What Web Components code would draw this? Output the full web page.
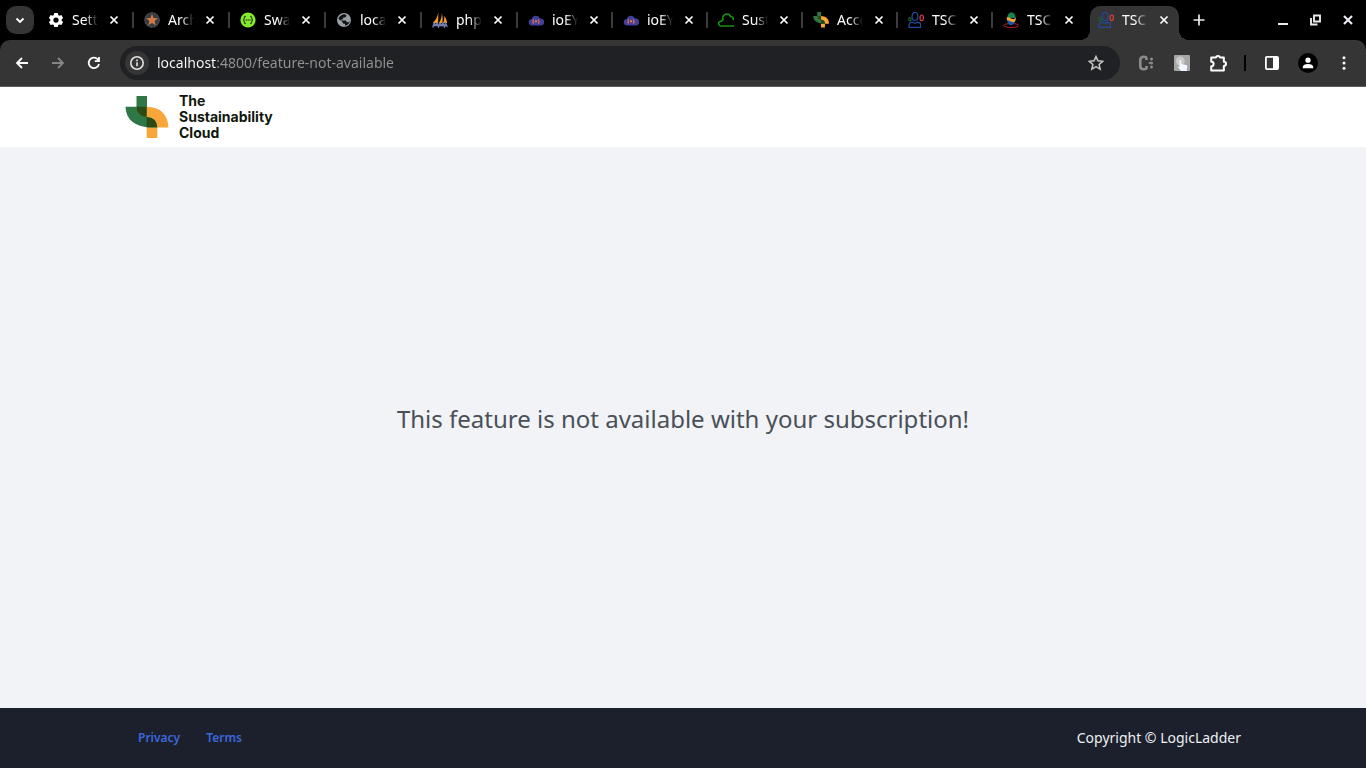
<!DOCTYPE html>
<html lang="en">
<head>
<meta charset="utf-8">
<title>TSC</title>
<style>
  html, body { margin: 0; height: 100%; }
  body { font-family: "Noto Sans", "Open Sans", sans-serif; display: flex; flex-direction: column; background: #f1f3f7; }
  feature-page { flex: 1; }
</style>
</head>
<body>
<browser-chrome></browser-chrome>
<feature-page>This feature is not available with your subscription!</feature-page>

<script>
const BRAND_MARK = `
  <path fill="#2f7745" d="M11.500 0H22v10.700h-.3V21Q32 21.500 32.300 31.500H26Q1 30 .500 10.700h11z"/>
  <path fill="#f8a63a" d="M21.700 10.700Q42 11 43.500 31.500H32.300V42H21.700V31.500h10.600Q32 21.500 21.700 21z"/>
  <path fill="#2c4a14" d="M11.500 10.700h10.200V21Q32 21.500 32.300 31.500H21.700V21q-10-1-10.200-10.300z"/>`;
const ICONS = {
  brand: `<g transform="scale(.37)">${BRAND_MARK}</g>`,
  chevron: '<path d="M4.500 6.500 8 10l3.500-3.500" fill="none" stroke="#fff" stroke-width="1.800"/>',
  close: '<path d="m4.500 4.500 7 7m0-7-7 7" fill="none" stroke="#fff" stroke-width="1.700"/>',
  plus: '<path d="M8 2.500v11M2.500 8h11" fill="none" stroke="#e8eaed" stroke-width="1.700"/>',
  gear: '<path fill="#fff" fill-rule="evenodd" d="M6.200 1h3.600l.4 2.100 1.200.7 2-.7 1.700 3-1.500 1.400v1.200l1.500 1.300-1.700 3.100-2-.7-1.200.7-.4 2H6.200l-.4-2-1.200-.7-2 .7L.9 10l1.500-1.300V7.500L.9 6.100l1.700-3 2 .7 1.200-.7zM8 5.500a2.600 2.600 0 1 0 0 5.200 2.600 2.600 0 0 0 0-5.200z"/>',
  star5: '<circle cx="8" cy="8" r="7.800" fill="#343a40"/><circle cx="8" cy="8" r="7" fill="none" stroke="#555b60" stroke-dasharray="2 1.500"/><path fill="#cf7a45" d="m8 1.800 1.600 4.300 4.500.1-3.500 2.800 1.200 4.500L8 11l-3.800 2.500L5.400 9 1.900 6.200l4.500-.1z"/>',
  swagger: '<circle cx="8" cy="8" r="7.600" fill="#85ea2d"/><path d="M6 4.300c-1.500 0-1.700.5-1.700 1.700S4.100 8 3 8c1.100 0 1.300.8 1.300 2s.2 1.700 1.700 1.700m4-7.400c1.500 0 1.700.5 1.700 1.700S11.900 8 13 8c-1.100 0-1.300.8-1.300 2s-.2 1.700-1.700 1.700" fill="none" stroke="#31551c" stroke-width="1.300"/><path d="M5.800 8h4.800" stroke="#31551c" stroke-width="1.500" stroke-dasharray="1.200 .6"/>',
  globe: '<circle cx="8" cy="8" r="7" fill="#9aa0a6"/><path fill="#111" d="M7.500 2.200c2.300-.3 3 .7 3 1.700L9.200 5.500H7.200v1.700H5.400v1.300h3.800q1.500.3 1.500 1.800h2.100q1-1.300 1-2.300.200 3-2.300 4.800l-2.600.9.3-1.900-1.600-.1-1.300-1.400V9.600L2.500 7c.2-1 .7-2 1.400-2.800l1.300-1z"/>',
  sails: '<path fill="#f59a22" d="M6.300 0C5.800 4 4 8 .8 11h5.400zm3.400 1C10 4 9 8 7 11h3.300c.6-3 .6-7-.6-10zM12 4c.6 2.500.1 5-.9 7h4C14.800 8 13.700 5.500 12 4z"/><path d="M.8 15.500 2 11l2 2 1.500-2 1 4 1.500-4 2 2.500 1-2.500 1.500 4 1-4 1.700 4M1 13.500h13" fill="none" stroke="#7480b4" stroke-width="1.300"/>',
  iot: '<path fill="#42409c" d="M3.500 13.500a3.300 3.300 0 0 1-.2-6.500h.6a4.200 4.200 0 0 1 8-.5h.6a3.500 3.500 0 0 1 .3 7z"/><circle cx="8" cy="9.300" r="1.100" fill="#f58634"/><path d="M5.700 7.200q-1.400 2.200 0 4.400m4.600-4.400q1.400 2.200 0 4.400" fill="none" stroke="#e16b4d" stroke-width="1.200"/>',
  cloud: '<path d="M16 14H3a2.400 2.400 0 0 1-1.500-4.200q.8-.8 1.900-.7L5 7.500C3.800 5 6 2.300 8.500 2c2-.2 3.500 1 4 2.600 2-.3 3 1.300 2.700 3.400" fill="none" stroke="#119311" stroke-width="1.600"/>',
  people: '<g fill="none" stroke-width="1.200"><ellipse cx="7" cy="4.500" rx="2.900" ry="4" stroke="#2149a0"/><path stroke="#2149a0" d="M1 15.300c-.4-3.500.8-5.300 3.500-5q2.500 1.600 5 0c2.700-.2 3.500 1.500 3 5z"/><ellipse cx="13.700" cy="5.800" rx="1.700" ry="2.800" stroke="#e23b43"/><ellipse cx="1.900" cy="7.200" rx="1.200" ry="1.600" stroke="#17632a"/></g>',
  earth: '<ellipse cx="8" cy="13.500" rx="7.400" ry="2" fill="none" stroke="#b7212d"/><path fill="#1e57aa" d="M4 8c2-.5 4 2.500 8 .8-1 3-2.500 4.500-4 4.500S4.200 11 4 8z"/><path fill="#16844a" d="M8.300.5c3 0 4.500 2.500 4.200 5.500L4.300 6c0-3 1.500-5.500 4-5.500z"/><path fill="#f6a63a" d="M3.800 5.300c3-.8 4 1.500 6 1.800 1.500.2 2.300-.7 3-1.500.2 2-.4 3.500-1.400 4.500-2.400.7-5-1.800-7.600-2z"/>',
  back: '<path d="M14 8H3m5-5L3 8l5 5" fill="none" stroke="#fff" stroke-width="1.800"/>',
  forward: '<path d="M2 8h11M8 3l5 5-5 5" fill="none" stroke="#858585" stroke-width="1.800"/>',
  reload: '<path d="M13 9a5.200 5.200 0 1 1-1.300-4.700L13 5.700M13 2v4.200H8.800" fill="none" stroke="#fff" stroke-width="1.800"/>',
  info: '<circle cx="8" cy="8" r="6.200" fill="none" stroke="#e3e3e3" stroke-width="1.600"/><path d="M8 7.200v4M8 4.600v1.600" stroke="#e3e3e3" stroke-width="1.600"/>',
  star: '<path d="m8 1.500 1.900 4.300 4.800.5-3.600 3.100 1.100 4.800L8 11.700l-4.200 2.500 1.100-4.800-3.600-3.100 4.800-.5z" fill="none" stroke="#c7c7c7" stroke-width="1.500"/>',
  ext: '<path d="M8.500 5V3.800Q8.500 1.700 5.700 1.700T2.300 4.400v7.200q0 2.700 3.400 2.700t2.800-2.100V11" fill="none" stroke="#8c8c8c" stroke-width="2.600"/><g fill="#8c8c8c"><circle cx="13.500" cy="4" r="1.500"/><circle cx="13.500" cy="8" r="1.500"/><circle cx="13.500" cy="12" r="1.500"/><circle cx="11.500" cy="8" r="1"/></g>',
  touch: '<rect width="16" height="16" rx="1" fill="#a6a6a6"/><circle cx="6.300" cy="6" r="4.500" fill="#c9c9c9"/><path fill="#f1f7ff" d="M5.500 5.500q.9-1 1.800 0V9l5 .9q1.200.4 1 1.800l-.6 4.300H7.200L4 12.200q.2-1.200 1.500-.5z"/>',
  puzzle: '<path d="M2 3.200h4.100a1.900 1.900 0 0 1 3.700 0h3.400v3.600a1.900 1.900 0 0 1 0 3.800v4.100H2v-3.700a2.100 2.100 0 0 0 0-4.200z" fill="none" stroke="#fff" stroke-width="1.800" stroke-linejoin="round"/>',
  panel: '<rect x="1.900" y="1.900" width="12.200" height="12.200" rx="1" fill="none" stroke="#fff" stroke-width="1.800"/><path fill="#fff" d="M9 2h5v12H9z"/>',
  user: '<circle cx="8" cy="4.800" r="3" fill="#fff"/><path fill="#fff" d="M2 14v-1.500Q2.500 9 8 9t6 3.500V14z"/>',
  dots: '<g fill="#fff"><circle cx="8" cy="2.800" r="1.500"/><circle cx="8" cy="8" r="1.500"/><circle cx="8" cy="13.200" r="1.500"/></g>',
  min: '<path d="M2 12h10" stroke="#e8eaed" stroke-width="2"/>',
  restore: '<path d="M6 3.500h6v6H6z" fill="none" stroke="#e8eaed" stroke-width="1.900"/><path d="M3 6v6.500h6.500" fill="none" stroke="#e8eaed" stroke-width="1.900"/>',
  winclose: '<path d="m4 4 8 8m0-8-8 8" stroke="#e8eaed" stroke-width="2.200"/>'
};

class UiIcon extends HTMLElement {
  connectedCallback() {
    this.attachShadow({ mode: 'open' }).innerHTML = `
      <style>:host{display:block;flex:none;width:16px;height:16px}svg{display:block;width:100%;height:100%}</style>
      <svg viewBox="0 0 16 16" aria-hidden="true">${ICONS[this.getAttribute('name')]}</svg>`;
  }
}
customElements.define('ui-icon', UiIcon);

class IconButton extends HTMLElement {
  connectedCallback() {
    this.attachShadow({ mode: 'open' }).innerHTML = `
      <style>
        :host{display:block;flex:none;width:28px;height:28px}
        button{all:unset;box-sizing:border-box;width:100%;height:100%;display:grid;place-items:center;border-radius:var(--radius,50%);background:var(--fill,transparent);cursor:pointer}
        ui-icon{width:var(--size,16px);height:var(--size,16px)}
      </style>
      <button type="button" aria-label="${this.getAttribute('label')}"><ui-icon name="${this.getAttribute('icon')}"></ui-icon></button>`;
  }
}
customElements.define('icon-button', IconButton);

class BrowserTab extends HTMLElement {
  connectedCallback() {
    this.attachShadow({ mode: 'open' }).innerHTML = `
      <style>
        :host{display:flex;box-sizing:border-box;align-items:center;flex:0 1 auto;width:95px;min-width:0;height:34px;padding:0 0 6px 10px;position:relative;color:#fff}
        :host([wide]){width:96px}
        .title{all:unset;flex:none;width:26px;margin:0 6px 0 8px;overflow:hidden;white-space:nowrap;font-size:14px;line-height:20px;
          -webkit-mask-image:linear-gradient(90deg,#000 50%,transparent);mask-image:linear-gradient(90deg,#000 50%,transparent)}
        icon-button{width:20px;height:20px}
        :host([sep])::after{content:"";position:absolute;right:0;top:6px;width:2px;height:16px;background:#3c3c3c}
        :host([active])::before{content:"";position:absolute;z-index:-1;inset:0 4px 0 2px;border-radius:10px 10px 0 0;background:#353535}
        :host([active])::after{content:"";position:absolute;z-index:-1;left:-8px;right:-6px;bottom:0;height:10px;
          background:radial-gradient(circle at 0 0,transparent 10px,#353535 10px) left/10px 10px no-repeat,radial-gradient(circle at 100% 0,transparent 10px,#353535 10px) right/10px 10px no-repeat}
      </style>
      <ui-icon name="${this.getAttribute('icon')}"></ui-icon>
      <button class="title" type="button" role="tab"><slot></slot></button>
      <icon-button icon="close" label="Close tab"></icon-button>`;
  }
}
customElements.define('browser-tab', BrowserTab);

class AddressBar extends HTMLElement {
  connectedCallback() {
    this.attachShadow({ mode: 'open' }).innerHTML = `
      <style>
        :host{display:flex;box-sizing:border-box;align-items:center;flex:1;min-width:0;height:34px;padding:0 10px 0 5px;border-radius:17px;background:#202124}
        .info{--fill:#353535;width:24px;height:24px}
        input{all:unset;flex:1;min-width:0;margin-left:8px;font-size:14px;line-height:20px;
          color:transparent;background:linear-gradient(90deg,#fff 60px,#939393 60px);-webkit-background-clip:text;background-clip:text}
      </style>
      <icon-button class="info" icon="info" label="Site information"></icon-button>
      <input type="text" aria-label="Address" value="localhost:4800/feature-not-available">
      <icon-button icon="star" label="Bookmark this tab"></icon-button>`;
  }
}
customElements.define('address-bar', AddressBar);

class BrowserChrome extends HTMLElement {
  connectedCallback() {
    this.attachShadow({ mode: 'open' }).innerHTML = `
      <style>
        :host{display:block;background:#000;flex:none}
        .strip{display:flex;align-items:center;height:40px;padding:0 4px 0 6px;position:relative;z-index:0}
        .search{--fill:#353535;--radius:10px}
        .tabs{display:flex;align-self:flex-end;margin-left:4px;min-width:0}
        .new{margin-left:2px}
        .windows{display:flex;gap:4px;margin-left:auto}
        .bar{display:flex;align-items:center;box-sizing:border-box;height:47px;padding:0 8px;border-bottom:1px solid #5c5c5c;border-radius:10px 10px 0 0;background:#353535}
        nav{display:flex;gap:8px;margin-right:12px}
        .tools{display:flex;align-items:center;gap:8px;margin-left:12px}
        .rule{width:2px;height:16px;margin:0 4px;background:#000}
        .user{--fill:#000;--size:14px;width:20px;height:20px;margin:0 4px}
        .puzzle{--size:18px}
      </style>
      <div class="strip">
        <icon-button class="search" icon="chevron" label="Search tabs"></icon-button>
        <div class="tabs" role="tablist">
          <browser-tab wide sep icon="gear">Settings</browser-tab>
          <browser-tab wide sep icon="star5">Archive</browser-tab>
          <browser-tab wide sep icon="swagger">Swagger</browser-tab>
          <browser-tab wide sep icon="globe">localhost</browser-tab>
          <browser-tab wide sep icon="sails">phpMyAdmin</browser-tab>
          <browser-tab sep icon="iot">ioEYE</browser-tab>
          <browser-tab sep icon="iot">ioEYE</browser-tab>
          <browser-tab sep icon="cloud">Sustain</browser-tab>
          <browser-tab sep icon="brand">Account</browser-tab>
          <browser-tab sep icon="people">TSC</browser-tab>
          <browser-tab icon="earth">TSC</browser-tab>
          <browser-tab active icon="people">TSC</browser-tab>
        </div>
        <icon-button class="new" icon="plus" label="New tab"></icon-button>
        <div class="windows">
          <icon-button icon="min" label="Minimize"></icon-button>
          <icon-button icon="restore" label="Restore"></icon-button>
          <icon-button icon="winclose" label="Close"></icon-button>
        </div>
      </div>
      <div class="bar">
        <nav>
          <icon-button icon="back" label="Back"></icon-button>
          <icon-button icon="forward" label="Forward"></icon-button>
          <icon-button icon="reload" label="Reload"></icon-button>
        </nav>
        <address-bar></address-bar>
        <div class="tools">
          <icon-button icon="ext" label="Extension"></icon-button>
          <icon-button icon="touch" label="Touch extension"></icon-button>
          <icon-button class="puzzle" icon="puzzle" label="Extensions"></icon-button>
          <span class="rule"></span>
          <icon-button icon="panel" label="Side panel"></icon-button>
          <icon-button class="user" icon="user" label="Profile"></icon-button>
          <icon-button icon="dots" label="Menu"></icon-button>
        </div>
      </div>`;
  }
}
customElements.define('browser-chrome', BrowserChrome);

class SiteLogo extends HTMLElement {
  connectedCallback() {
    this.attachShadow({ mode: 'open' }).innerHTML = `
      <style>
        :host{display:block}
        a{display:flex;align-items:center;gap:10px;color:#10170c;text-decoration:none;font:700 14px/16px Inter,sans-serif}
        svg{width:44px;height:42px}
        span{display:block}
      </style>
      <a href="#"><svg viewBox="0 0 44 42" aria-hidden="true">${BRAND_MARK}</svg>
      <div><span>The</span><span>Sustainability</span><span>Cloud</span></div></a>`;
  }
}
customElements.define('site-logo', SiteLogo);

class FeaturePage extends HTMLElement {
  connectedCallback() {
    this.attachShadow({ mode: 'open' }).innerHTML = `
      <style>
        :host{display:flex;flex-direction:column;background:#f1f3f7}
        .wrap{display:flex;align-items:center;box-sizing:border-box;width:100%;max-width:1140px;height:60px;margin:0 auto;padding:0 12px}
        header{background:#fff}
        main{flex:1;display:grid;place-items:center;padding-bottom:18px}
        h1{margin:0;color:#495057;font-size:24px;line-height:32px;font-weight:400;text-align:center}
        footer{background:#1b202c}
        nav{display:flex;gap:26px;margin-left:13px}
        nav a{color:#3b67dd;font-size:12px;line-height:20px;font-weight:600;text-decoration:none}
        p{margin:0 0 0 auto;color:#eef0f3;font-size:14px;line-height:20px}
      </style>
      <header><div class="wrap"><site-logo></site-logo></div></header>
      <main><h1><slot></slot></h1></main>
      <footer><div class="wrap">
        <nav><a href="#privacy">Privacy</a><a href="#terms">Terms</a></nav>
        <p>Copyright © LogicLadder</p>
      </div></footer>`;
  }
}
customElements.define('feature-page', FeaturePage);
</script>
</body>
</html>
